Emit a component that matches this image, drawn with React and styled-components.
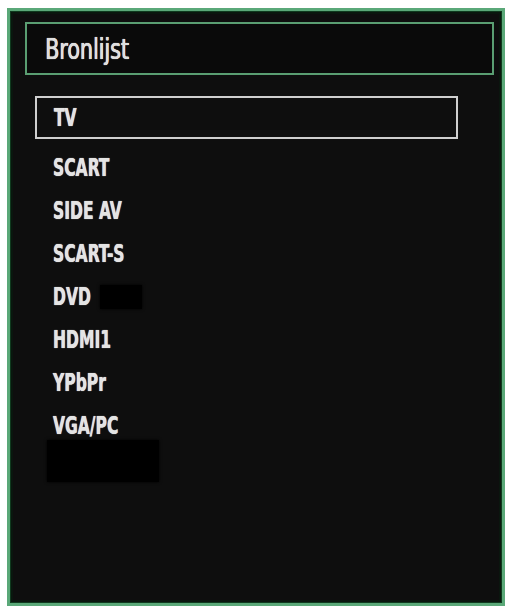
import styled, { createGlobalStyle } from "styled-components";

const GlobalStyle = createGlobalStyle`
  html, body {
    margin: 0;
    padding: 0;
    background: #ffffff;
  }
  body {
    font-family: "DejaVu Sans Condensed", "Liberation Sans", sans-serif;
  }
`;

const Frame = styled.div`
  box-sizing: border-box;
  width: 498px;
  height: 598px;
  margin: 8px 0 0 7px;
  border: 3px solid #5aa878;
  box-shadow: inset 0 0 0 1px #0f3a1e, inset 0 0 0 3px #0a160e;
  background: #0e0e0e;
  padding: 11px 8px 0 15px;
  display: flex;
  flex-direction: column;
`;

const Header = styled.div`
  box-sizing: border-box;
  height: 53px;
  border: 2px solid #5a9e72;
  background: #0a0a0a;
  display: flex;
  align-items: center;
  padding: 2px 0 0 18px;
`;

const Title = styled.span`
  display: inline-block;
  font-size: 28px;
  color: #dedede;
  text-shadow: 0 0 1px #ffffff, 0.5px 0 0 #dedede;
  transform: scaleX(0.82);
  transform-origin: left center;
`;

const List = styled.div`
  display: flex;
  flex-direction: column;
  margin-top: 21px;
  padding-left: 10px;
`;

const Row = styled.div`
  box-sizing: border-box;
  width: ${(p) => (p.$selected ? "423px" : "auto")};
  height: 43px;
  border: ${(p) => (p.$selected ? "2px solid #cfcfcf" : "2px solid transparent")};
  margin-bottom: ${(p) => (p.$selected ? "7px" : "0")};
  display: flex;
  align-items: center;
  padding-left: ${(p) => (p.$selected ? "17px" : "16px")};
`;

const Label = styled.span`
  display: inline-block;
  font-size: 24px;
  font-weight: bold;
  color: #e4e4e4;
  text-shadow: 0 0 1px #ffffff;
  transform: scaleX(0.72);
  transform-origin: left center;
  white-space: nowrap;
`;

const Patch = styled.div`
  background: #000000;
  box-shadow: 0 0 3px #000;
  width: ${(p) => p.$w}px;
  height: ${(p) => p.$h}px;
  margin-left: ${(p) => p.$left}px;
  margin-top: ${(p) => p.$top || 0}px;
`;

const sources = ["SCART", "SIDE AV", "SCART-S", "DVD", "HDMI1", "YPbPr", "VGA/PC"];

function App() {
  return (
    <>
      <GlobalStyle />
      <Frame>
        <Header>
          <Title>Bronlijst</Title>
        </Header>
        <List>
          <Row $selected>
            <Label>TV</Label>
          </Row>
          {sources.map((s) => (
            <Row key={s}>
              <Label>{s}</Label>
              {s === "DVD" && <Patch $w={42} $h={24} $left={-6} />}
            </Row>
          ))}
          <Patch $w={112} $h={42} $left={12} $top={-7} />
        </List>
      </Frame>
    </>
  );
}

export default App;
